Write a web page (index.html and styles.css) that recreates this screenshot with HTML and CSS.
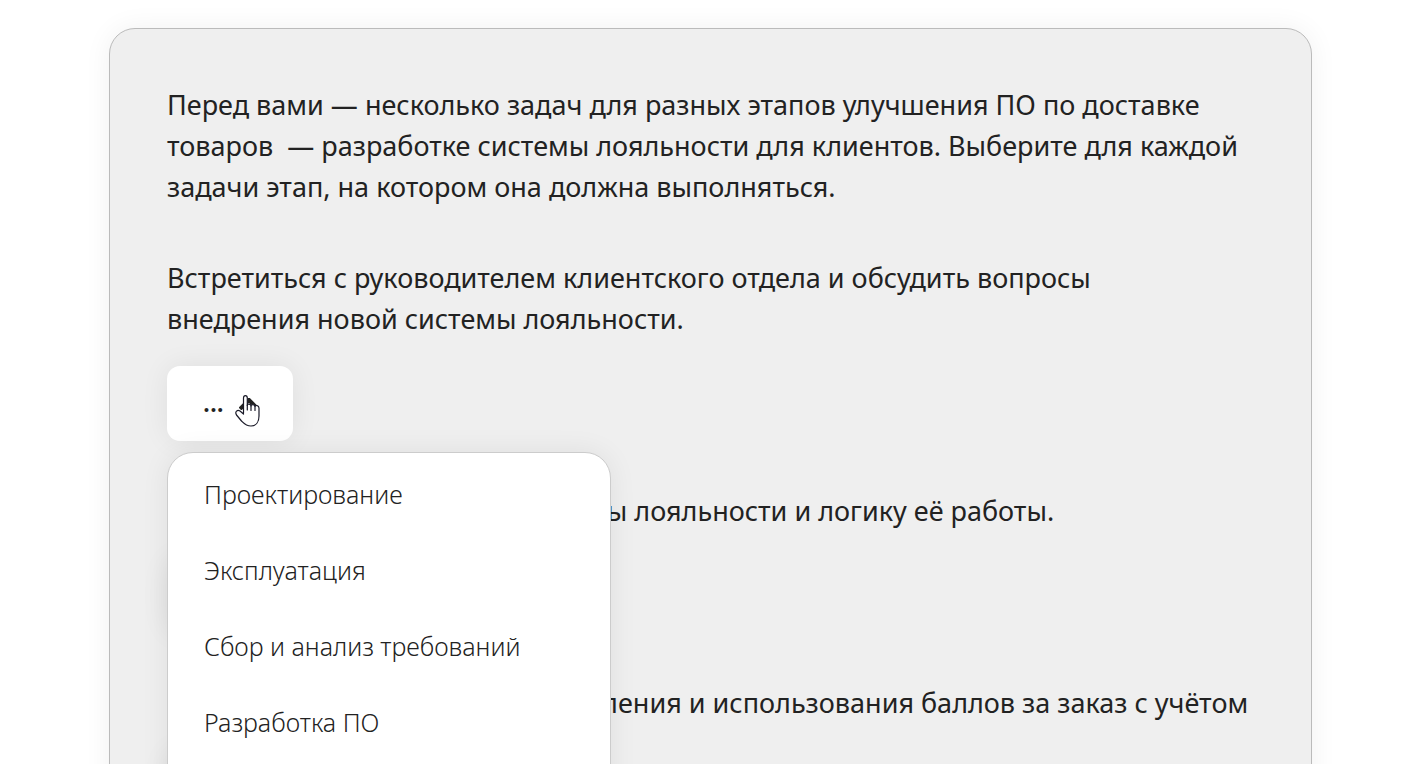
FILE: index.html
```
<!DOCTYPE html>
<html lang="ru">
<head>
  <meta charset="UTF-8">
  <meta name="viewport" content="width=device-width, initial-scale=1">
  <title>Этапы разработки</title>
  <link rel="stylesheet" href="styles.css">
</head>
<body>

<main class="card">
  <p>Перед вами — несколько задач для разных этапов улучшения ПО по доставке<br>товаров&nbsp; — разработке системы лояльности для клиентов. Выберите для каждой<br>задачи этап, на котором она должна выполняться.</p>

  <div class="task">
    <p id="task1">Встретиться с руководителем клиентского отдела и обсудить вопросы<br>внедрения новой системы лояльности.</p>
    <div class="picker">
      <button type="button" class="picker-btn" aria-haspopup="listbox" aria-expanded="true" aria-labelledby="task1">
        <span>...</span>
        <svg class="arrow" viewBox="0 0 20 12" aria-hidden="true"><path d="M1 11 L10 2 L19 11"/></svg>
      </button>
      <ul class="menu">
        <li><button type="button">Проектирование</button></li>
        <li><button type="button">Эксплуатация</button></li>
        <li><button type="button">Сбор и анализ требований</button></li>
        <li><button type="button">Разработка ПО</button></li>
        <li><button type="button">Тестирование</button></li>
      </ul>
      <svg class="pointer" viewBox="0 0 26 34" aria-hidden="true">
        <path d="M8.500 19 V4 C8.500 .8 12.300 .8 12.300 4 V11.500 C12.300 9.500 16 9.500 16 12 C16 10 20 10 20 12.500 C20 11 24 11 24 14 V22 C24 28 21 32 16 32 C11 32 9 29.500 6.500 27 L1.500 21 C-.5 17.500 2.500 15.500 5 17 L8.500 20"/>
        <path d="M12.300 11 V16 M16 12 V16.500 M20 12.500 V16.500"/>
      </svg>
    </div>
  </div>

  <div class="task">
    <p id="task2">Описать архитектуру всей системы лояльности и логику её работы.</p>
    <div class="picker">
      <button type="button" class="picker-btn" aria-haspopup="listbox" aria-labelledby="task2">
        <span>...</span>
        <svg class="arrow" viewBox="0 0 20 12" aria-hidden="true"><path d="M1 1 L10 10 L19 1"/></svg>
      </button>
    </div>
  </div>

  <div class="task">
    <p id="task3">Реализовать новую логику начисления и использования баллов за заказ с учётом</p>
    <div class="picker">
      <button type="button" class="picker-btn" aria-haspopup="listbox" aria-labelledby="task3">
        <span>...</span>
        <svg class="arrow" viewBox="0 0 20 12" aria-hidden="true"><path d="M1 1 L10 10 L19 1"/></svg>
      </button>
    </div>
  </div>
</main>

</body>
</html>
```
FILE: styles.css
```
* {
  box-sizing: border-box;
}
body {
  margin: 0;
  height: 100vh;
  padding: 28px 111px 0 109px;
  overflow: hidden;
  background: #fff;
  color: #222;
  font-family: "Noto Sans", "Open Sans", sans-serif;
  font-size: 27px;
  line-height: 41px;
}
p {
  margin: 0;
}
button {
  border: none;
  background: none;
  color: inherit;
  font: inherit;
  cursor: pointer;
}
.card {
  padding: 55px 57px;
  background: #efefef;
  border: 1px solid #bbb;
  border-radius: 26px;
  box-shadow: 0 0 28px rgba(0, 0, 0, 0.06);
  white-space: nowrap;
}
.task {
  margin-top: 50px;
}
.task + .task {
  margin-top: 49px;
}
.picker {
  position: relative;
  width: fit-content;
  margin-top: 27px;
}
.picker-btn {
  display: flex;
  align-items: center;
  gap: 15px;
  width: 126px;
  height: 75px;
  padding: 0 36px;
  background: #fff;
  border-radius: 13px;
  box-shadow: 0 0 28px rgba(0, 0, 0, 0.07);
}
.picker-btn span {
  padding-bottom: 2px;
  font-weight: 600;
  font-size: 25px;
}
.arrow {
  flex: none;
  width: 20px;
  height: 12px;
  fill: none;
  stroke: #222;
  stroke-width: 4;
}
.menu {
  position: absolute;
  z-index: 1;
  top: 86px;
  left: 0;
  width: 444px;
  margin: 0;
  padding: 3px 0;
  list-style: none;
  background: #fff;
  border: 1px solid #ccc;
  border-radius: 26px;
  box-shadow: 0 0 28px rgba(0, 0, 0, 0.07);
}
.menu button {
  width: 100%;
  height: 76px;
  padding: 0 36px;
  font-size: 25px;
  font-weight: 300;
  text-align: left;
}
.pointer {
  position: absolute;
  z-index: 2;
  top: 28px;
  left: 68px;
  width: 26px;
  height: 34px;
  fill: #fff;
  stroke: #1a1a28;
  stroke-width: 1.2;
  stroke-linecap: round;
  stroke-linejoin: round;
}
```
